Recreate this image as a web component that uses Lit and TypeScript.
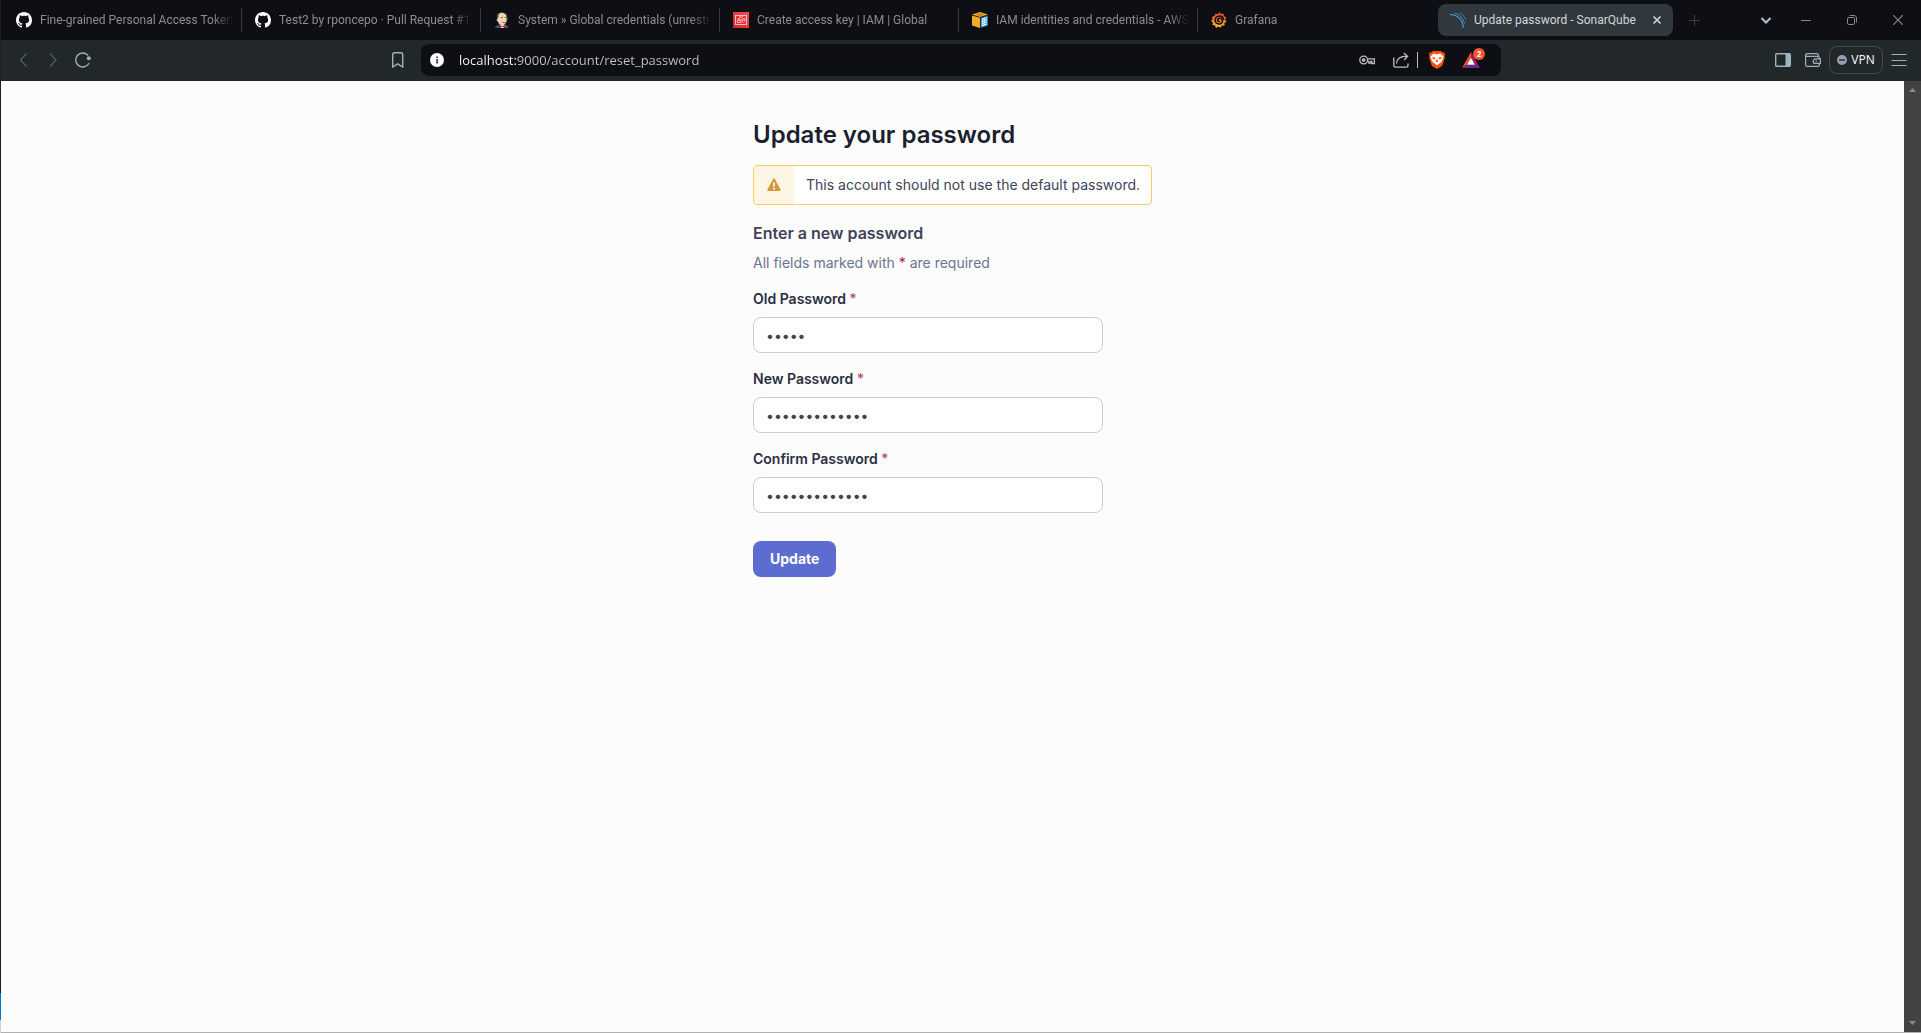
import { LitElement, html, svg, css, nothing } from "lit";
import { customElement, property } from "lit/decorators.js";
import { classMap } from "lit/directives/class-map.js";

const githubIcon = html`<svg width="16" height="16" viewBox="0 0 16 16" aria-hidden="true">
  <path fill="#fff" d="M8 0C3.58 0 0 3.58 0 8c0 3.54 2.29 6.53 5.47 7.59.4.07.55-.17.55-.38 0-.19-.01-.82-.01-1.49-2.01.37-2.53-.49-2.69-.94-.09-.23-.48-.94-.82-1.13-.28-.15-.68-.52-.01-.53.63-.01 1.08.58 1.23.82.72 1.21 1.87.87 2.33.66.07-.52.28-.87.51-1.07-1.78-.2-3.64-.89-3.64-3.95 0-.87.31-1.59.82-2.15-.08-.2-.36-1.02.08-2.12 0 0 .67-.21 2.2.82.64-.18 1.32-.27 2-.27s1.36.09 2 .27c1.53-1.04 2.2-.82 2.2-.82.44 1.1.16 1.92.08 2.12.51.56.82 1.27.82 2.15 0 3.07-1.87 3.75-3.65 3.95.29.25.54.73.54 1.48 0 1.07-.01 1.93-.01 2.2 0 .21.15.46.55.38A8.01 8.01 0 0 0 16 8c0-4.42-3.58-8-8-8z"/>
</svg>`;

const jenkinsIcon = html`<svg width="16" height="16" viewBox="0 0 16 16" aria-hidden="true">
  <path fill="#3a5366" d="M1 16c.2-1.7 1.6-2.700 3.600-3.200l6.400-.3c2 .4 3.400 1.500 3.500 3.500z"/>
  <path fill="#f0d6b7" stroke="#3b3028" stroke-width=".7" d="M3.300 3.200C4.500.8 7 .2 9.200.7c2.800.6 4.100 2.800 4 5.600 0 3-1.200 6-3.700 6.900C7 13.800 4.500 12.500 3.900 9.900 2.600 9.300 2.300 7.600 3.200 6.700z"/>
  <path fill="#6d5846" d="M3 3.400c.6-1.300 1.500-2 2.500-2.400C4.700 2.500 4.900 4.600 4.200 6L3.200 6.800zM11.800 2c1 .9 1.600 2.400 1.500 4.200l-.7.800z"/>
  <path fill="#42352b" d="M7 5h1.800v.8H7zM10.600 5h1.500v.8h-1.500zM8.300 9.700c1 .7 2 .7 3 .1v.7c-1 .5-2 .5-3 0z"/>
  <path fill="#fff" d="M6 12.800l2.500-.3 2.400.3-1.400 3.200H7z"/>
  <path fill="#d3252b" d="M5.700 13l2.700 1 2.800-1.200.2 3-3-1-2.500 1z"/>
</svg>`;

const iamIcon = html`<svg width="16" height="16" viewBox="0 0 16 16" aria-hidden="true">
  <defs><linearGradient id="iam" x1="0" y1="1" x2="1" y2="0"><stop offset="0" stop-color="#d0232c"/><stop offset="1" stop-color="#f74b50"/></linearGradient></defs>
  <path fill="url(#iam)" d="M0 0h16v16H0z"/>
  <g fill="none" stroke="#ffc9ca" stroke-width=".9">
    <rect x="2.500" y="3.500" width="11" height="9"/>
    <path d="M6 4.900h4M4.400 10.500V8.300h3.200v2.200zM5 8.200V7.100c0-1 2-1 2 0v1.100M9.200 7h2.900M9.200 7v3.600M11.700 7v1.800h-1"/>
  </g>
</svg>`;

const awsIcon = html`<svg width="16" height="16" viewBox="0 0 16 16" aria-hidden="true">
  <path fill="#f5b335" d="M0 2.600L8 0l8 2.600L8 5z"/>
  <path fill="#8b5b12" d="M2.700 2.600L8 1l5.300 1.600L8 4.200z" opacity=".45"/>
  <path fill="#f3ab24" d="M0 3.400l8 2.300V16l-8-2.600z"/>
  <path fill="#1f7fb5" d="M8.700 5.700L16 3.400v10.200L8.700 16z"/>
  <path fill="#e9f6fd" d="M9.800 6.600l4.800-1.500v7.800l-4.800 1.500z"/>
  <path stroke="#1f7fb5" stroke-width=".9" d="M10.600 8.100l1.300-.4M12.600 7.500l1.300-.4M10.600 10.300l1.300-.4M12.600 9.700l1.300-.4M10.600 12.400l1.300-.4M12.600 11.800l1.300-.4"/>
</svg>`;

const grafanaIcon = html`<svg width="16" height="16" viewBox="0 0 16 16" aria-hidden="true">
  <defs><linearGradient id="gf" x1="0" y1="0" x2="0" y2="1"><stop offset="0" stop-color="#f0472a"/><stop offset=".55" stop-color="#f58024"/><stop offset="1" stop-color="#fcc21b"/></linearGradient></defs>
  <path fill="url(#gf)" d="M8.300 0l1.500 1.900 2.700-.4.300 2.600 2.400 1.300-1.100 2.100 1.400 2.300-2.100 1.300.1 2.600-2.700-.1-1.200 2.200-2.200-1.400-2.400 1.500-1-2.500-2.600-.3.500-2.400L0 8.900l1.600-1.700L1 4.700l2.500-.6L4.500 1.600l2.300.6z"/>
  <path fill="none" stroke="#0e0f14" stroke-width="1.500" stroke-linecap="round" d="M12.700 7.500C12.300 5.100 10.700 3.900 8.500 3.900 5.800 3.900 4.100 5.900 4.200 8.300c.2 2.200 1.900 3.800 4.100 3.700 2-.1 3.200-1.600 3.100-3.300-.1-1.600-1.300-2.600-2.700-2.500-1.300.1-2.100 1-2 2.100.1.900.8 1.400 1.600 1.300"/>
</svg>`;

const sonarIcon = html`<svg width="16" height="16" viewBox="0 0 16 16" aria-hidden="true">
  <g fill="none" stroke="#4695c8" stroke-linecap="round">
    <path stroke-width="1.200" d="M.5 2.600C7.500 2.600 13 8 13.200 15.400"/>
    <path stroke-width="1" d="M5.300 1.300c4.600 1.400 8 5 9.100 9.800"/>
    <path stroke-width=".8" d="M9.700.7c2.800 1.400 4.900 3.800 6 6.800"/>
  </g>
</svg>`;

const stroke = (size: number, d: string, width = 1) => html`<svg width=${size} height=${size} viewBox="0 0 ${size} ${size}" aria-hidden="true">
  ${svg`<path d=${d} fill="none" stroke="currentColor" stroke-width=${width}/>`}
</svg>`;

interface Tab {
  title: string;
  icon: unknown;
  active?: boolean;
}

const tabs: Tab[] = [
  { title: "Fine-grained Personal Access Tokens", icon: githubIcon },
  { title: "Test2 by rponcepo · Pull Request #18", icon: githubIcon },
  { title: "System » Global credentials (unrestri", icon: jenkinsIcon },
  { title: "Create access key | IAM | Global", icon: iamIcon },
  { title: "IAM identities and credentials - AWS", icon: awsIcon },
  { title: "Grafana", icon: grafanaIcon },
  { title: "Update password - SonarQube", icon: sonarIcon, active: true },
];

const resetButton = css`
  * { box-sizing: border-box; }
  button { border: 0; padding: 0; margin: 0; background: none; color: inherit; font: inherit; cursor: pointer; }
  svg { display: block; flex: none; }
`;

@customElement("tab-strip")
class TabStrip extends LitElement {
  static styles = [resetButton, css`
    :host {
      display: flex; align-items: center; height: 40px; padding-left: 2px;
      background: #0e0f14; color: #8c8d90;
      font: 12px/16px Roboto, "Open Sans", sans-serif;
    }
    .tabs { display: flex; align-items: center; min-width: 0; flex: 0 1 auto; }
    .tab {
      display: flex; align-items: center; flex: 0 1 239px; width: 239px; min-width: 0;
      height: 24px; padding: 0 8px 0 13px; border-right: 1px solid #3a3b3e;
    }
    .tab.last { border-right-color: transparent; }
    .tab.active {
      flex-basis: 235px; width: 235px; height: 32px; margin: 0 3px 0 1px; padding: 0 8px 0 12px;
      border: 0; border-radius: 8px; background: #30383d; color: #d3d6d8;
    }
    .main { display: flex; align-items: center; gap: 8px; min-width: 0; flex: 1; text-align: left; }
    .title {
      flex: 1; min-width: 0; overflow: hidden; white-space: nowrap;
      mask-image: linear-gradient(to right, #000 calc(100% - 20px), transparent);
    }
    .active .title { mask-image: none; }
    .icon-button { display: grid; place-items: center; flex: none; height: 32px; }
    .close { width: 16px; height: 16px; color: #d3d6d8; }
    .add { width: 32px; margin-left: 2px; color: #3c3e42; }
    .controls { display: flex; margin-left: auto; flex: none; }
    .search { width: 28px; margin-right: 3px; color: #b4c5cc; }
    .control { width: 46px; color: #85878a; }
  `];

  render() {
    return html`
      <div class="tabs">
        ${tabs.map((t, i) => html`
          <div class=${classMap({ tab: true, active: !!t.active, last: !!tabs[i + 1]?.active })}>
            <button class="main">${t.icon}<span class="title">${t.title}</span></button>
            ${t.active ? html`<button class="icon-button close" aria-label="Close tab">${stroke(10, "M1.500 1.500l7 7M8.500 1.500l-7 7", 1.6)}</button>` : nothing}
          </div>`)}
      </div>
      <button class="icon-button add" aria-label="New tab">${stroke(11, "M0 5.500h11M5.500 0v11", 1)}</button>
      <div class="controls">
        <button class="icon-button search" aria-label="Search tabs">${stroke(12, "M1.500 4L6 8.500 10.500 4", 2)}</button>
        <button class="icon-button control" aria-label="Minimize">${stroke(10, "M0 5.500h10")}</button>
        <button class="icon-button control" aria-label="Restore">${stroke(10, "M.5 4Q.5 2.500 2 2.500h4Q7.500 2.500 7.500 4v4Q7.500 9.500 6 9.500H2Q.5 9.500 .5 8zM2.500 .5H7Q9.500 .5 9.500 3v4.500")}</button>
        <button class="icon-button control" aria-label="Close window">${stroke(10, "M0 0l10 10M10 0L0 10", 1.2)}</button>
      </div>`;
  }
}

@customElement("nav-bar")
class NavBar extends LitElement {
  static styles = [resetButton, css`
    :host {
      display: grid; grid-template-columns: 1fr minmax(0, 1080px) 1fr; align-items: center;
      height: 41px; padding-bottom: 1px; background: #22272a; color: #9db2bc;
      font: 12px/20px "Open Sans", "Noto Sans", sans-serif;
    }
    .left, .right, .address, .actions { display: flex; align-items: center; }
    .left { padding: 0 14px; gap: 14px; }
    .left button { display: grid; place-items: center; width: 16px; height: 24px; }
    .left .dim { color: #555f64; }
    .left .bookmark { margin-left: auto; }
    .address { height: 32px; padding: 0 21px 0 9px; border-radius: 8px; background: #0e0f14; gap: 15px; }
    .url {
      flex: 1; min-width: 0; border: 0; padding: 0; outline: 0; font: 13px/20px "Open Sans", "Noto Sans", sans-serif;
      color: transparent; caret-color: #fff;
      background: linear-gradient(to right, #fff 58px, #c3c4c6 58px); background-clip: text; -webkit-background-clip: text;
    }
    .actions { gap: 10px; color: #b9bcbe; }
    .share { margin-left: 8px; }
    .divider { width: 1px; height: 16px; background: #b9bcbe; margin: 0 1px 0 -2px; }
    .rewards { position: relative; margin-left: 7px; }
    .badge {
      position: absolute; left: 11px; top: -4px; width: 12px; height: 12px; border-radius: 6px;
      background: #fb542b; color: #fff; font: 700 8px/12px "Open Sans", sans-serif; text-align: center;
    }
    .right { justify-content: flex-end; gap: 14px; padding-right: 14px; }
    .vpn {
      display: flex; align-items: center; justify-content: center; gap: 4px; width: 54px; height: 28px;
      border: 1px solid #3e4b50; border-radius: 8px; color: #fff; margin: 0 -6px;
    }
  `];

  render() {
    return html`
      <div class="left">
        <button class="dim" aria-label="Back">${stroke(16, "M11.500 1.500L5.500 8l6 6.500", 1.2)}</button>
        <button class="dim" aria-label="Forward">${stroke(16, "M5 1.500l6 6.500-6 6.500", 1.2)}</button>
        <button aria-label="Reload"><svg width="16" height="16" viewBox="0 0 16 16">
          <path fill="none" stroke="currentColor" stroke-width="1.400" stroke-linecap="round" d="M12.700 3A7 7 0 1 0 13.800 11.500"/>
          <circle cx="13.800" cy="6.300" r="2" fill="currentColor"/></svg></button>
        <button class="bookmark" aria-label="Bookmark">${stroke(16, "M1.700 2.500Q1.700 .7 3.500 .7h6.400Q11.700 .7 11.700 2.500v12.500L6.700 11.800l-5 3.200z", 1.4)}</button>
      </div>
      <div class="address">
        <button aria-label="Site information"><svg width="14" height="14" viewBox="0 0 14 14"><circle cx="7" cy="7" r="7" fill="#fff"/><path fill="#22272a" d="M6.300 3.500h1.500v1.500H6.300zM6.300 6h1.500v4.500H6.300z"/></svg></button>
        <input class="url" type="text" aria-label="Address" value="localhost:9000/account/reset_password" />
        <div class="actions">
          <button aria-label="Passwords"><svg width="16" height="16" viewBox="0 0 16 16" fill="none" stroke="currentColor" stroke-width="1.300">
            <circle cx="4.700" cy="8" r="3.900"/><circle cx="4.700" cy="8" r="1.200" fill="currentColor"/>
            <path d="M8.500 6.800h6.900v4.700h-2.600V9.300h-1v1.700H9.800V9.300H8.500"/></svg></button>
          <button class="share" aria-label="Share">${stroke(16, "M.8 5.500v8Q.8 15.200 2.500 15.200h10.800Q15 15.200 15 13.500V11.500M3.500 11.500C3.800 7 7 4.200 14 4.200M10.800 .9L14.500 4.200l-3.300 3.800", 1.3)}</button>
          <span class="divider"></span>
          <button aria-label="Shields"><svg width="16" height="18" viewBox="2 0 14 18" preserveAspectRatio="none">
            <path fill="#fb4f0b" d="M5.500 0h7l1.500 1.500 1.600-.1 .4 2.200-.3 1.500.2 1.600-2 7.100q-.4 1.300-1.500 2L9 18l-3.400-2.200q-1.100-.7-1.500-2l-2-7.100.2-1.600-.3-1.500 .4-2.200 1.600.1z"/>
            <path fill="#fff" d="M6 2.600l3 .7 3-.7 2.700 3-.7 2.600-1.300 3-1.800 1.300-1.900 2-1.900-2-1.800-1.300-1.300-3-.7-2.600z"/>
            <path fill="#fb4f0b" d="M4.800 5.900l3.100.8-.7 1.600-1.900-.6zM13.200 5.900l-3.100.8.7 1.600 1.900-.6zM8.600 8.500h.8l.7 2L9 11.300l-1.100-.8z"/></svg></button>
          <button class="rewards" aria-label="Rewards"><svg width="18" height="16" viewBox="0 0 18 16">
            <path fill="#ff4724" d="M9 0v6L4.800 12.800 0 16z"/>
            <path fill="#9e1f63" d="M9 0l9 16-4.800-3.200L9 6z"/>
            <path fill="#662d91" d="M0 16l4.800-3.300h8.400L18 16z"/>
            <path fill="#fff" d="M9 5.800l4 7H5z"/></svg><span class="badge">2</span></button>
        </div>
      </div>
      <div class="right">
        <button aria-label="Sidebar"><svg width="16" height="14" viewBox="0 0 16 14"><rect x=".7" y=".7" width="14.600" height="12.600" rx="1" fill="none" stroke="currentColor" stroke-width="1.400"/><path fill="currentColor" d="M10.500 1H15v12h-4.500z"/></svg></button>
        <button aria-label="Wallet"><svg width="16" height="14" viewBox="0 0 16 14" fill="none" stroke="currentColor" stroke-width="1.200">
          <path d="M.6 2.300V11.700Q.6 13.400 2.300 13.400h10.400q1.700 0 1.700-1.700V10.500M14.400 6V5Q14.400 3.400 12.700 3.400H2.300Q.6 3.400 .6 2Q.6 .6 2.300 .6h9.400q1.700 0 1.700 1.700v1"/>
          <path d="M15.400 5.900h-5a2.200 2.200 0 0 0 0 4.500h5zM10.500 8.200h1.400"/></svg></button>
        <button class="vpn"><svg width="10" height="10" viewBox="0 0 10 10"><circle cx="5" cy="5" r="5" fill="#9a9bb5"/><path fill="#22272a" d="M2 4.300h6v1.400H2z"/></svg>VPN</button>
        <button aria-label="Menu">${stroke(16, "M.5 2.500h15M.5 8.500h15M.5 13.500h15", 1.2)}</button>
      </div>`;
  }
}

@customElement("password-field")
class PasswordField extends LitElement {
  @property() label = "";
  @property() value = "";

  static styles = css`
    * { box-sizing: border-box; }
    :host { display: flex; flex-direction: column; gap: 8px; font: 14px/20px Inter, sans-serif; }
    label { color: #2a2f40; font-weight: 600; }
    .mark { color: #b23a56; font-weight: 400; }
    input {
      width: 100%; max-width: 350px; height: 36px; padding: 0 12px; border: 1px solid #c5cddf;
      border-radius: 8px; background: #fff; color: #3e4357; font: inherit; outline: 0;
    }
    input:focus { border-color: #5d6cd0; }
  `;

  render() {
    return html`
      <label for="field">${this.label} <span class="mark">*</span></label>
      <input id="field" type="password" required .value=${this.value} />`;
  }
}

@customElement("password-page")
class PasswordPage extends LitElement {
  static styles = css`
    * { box-sizing: border-box; }
    :host { display: block; padding: 36px 16px; background: #fcfcfd; font: 14px/20px Inter, sans-serif; color: #3e4357; }
    .column { width: 100%; max-width: 399px; margin: 0 auto; }
    h1 { margin: 0 0 12px; font-size: 24px; line-height: 36px; font-weight: 600; color: #1b1f30; }
    .alert { display: flex; height: 40px; margin-bottom: 16px; border: 1px solid #f8cd5c; border-radius: 4px; background: #fff; overflow: hidden; }
    .alert-icon { display: grid; place-items: center; width: 40px; flex: none; background: #fdf5e4; }
    .alert-text { margin: 0; padding: 9px 12px; white-space: nowrap; }
    h2 { margin: 0 0 8px; font-size: 16px; line-height: 24px; font-weight: 600; color: #3e4357; }
    .note { margin: 0 0 16px; color: #6a7590; }
    .mark { color: #a8293f; }
    form { display: flex; flex-direction: column; gap: 16px; }
    .submit {
      align-self: flex-start; height: 36px; margin-top: 12px; padding: 0 17px; border: 0; border-radius: 8px;
      background: #5d6cd0; color: #fff; font: 700 14px/20px Inter, sans-serif; cursor: pointer;
    }
  `;

  render() {
    return html`
      <main class="column">
        <h1>Update your password</h1>
        <div class="alert" role="alert">
          <span class="alert-icon"><svg width="14" height="14" viewBox="0 0 14 14" aria-hidden="true">
            <path fill="#d29a35" fill-rule="evenodd" d="M6.100 1q.9-1.300 1.800 0l5.600 10.500q.5 1.500-.9 1.500H1.400q-1.400 0-.9-1.500zM6 4.500v4h2v-4zM6 9.700v1.800h2V9.700z"/></svg></span>
          <p class="alert-text">This account should not use the default password.</p>
        </div>
        <h2>Enter a new password</h2>
        <p class="note">All fields marked with <span class="mark">*</span> are required</p>
        <form @submit=${(e: Event) => e.preventDefault()}>
          <password-field label="Old Password" value="admin"></password-field>
          <password-field label="New Password" value="correct-horse"></password-field>
          <password-field label="Confirm Password" value="correct-horse"></password-field>
          <button class="submit" type="submit">Update</button>
        </form>
      </main>`;
  }
}

@customElement("app-root")
class AppRoot extends LitElement {
  static styles = css`
    * { box-sizing: border-box; }
    :host { display: block; }
    .screen { display: flex; min-height: 100vh; }
    .edge { display: flex; flex-direction: column; width: 1px; flex: none; background: #1f1f1f; }
    .edge-blue { height: 27px; margin-top: auto; background: #0078d4; }
    .edge-grey { height: 13px; background: #d0d0d0; }
    .window { display: flex; flex-direction: column; flex: 1; min-width: 0; border-bottom: 1px solid #b0b0b0; }
    .body { display: flex; flex: 1; }
    .page { flex: 1; min-width: 0; }
    .scrollbar { display: flex; flex-direction: column; justify-content: space-between; align-items: center; width: 17px; padding: 7px 0; background: #424242; }
    .scrollbar svg { display: block; }
  `;

  render() {
    return html`
      <div class="screen">
        <div class="edge"><span class="edge-blue"></span><span class="edge-grey"></span></div>
        <div class="window">
          <tab-strip></tab-strip>
          <nav-bar></nav-bar>
          <div class="body">
            <password-page class="page"></password-page>
            <div class="scrollbar" aria-hidden="true">
              <svg width="7" height="4" viewBox="0 0 7 4"><path fill="#8a8a8a" d="M0 4l3.500-4L7 4z"/></svg>
              <svg width="7" height="4" viewBox="0 0 7 4"><path fill="#8a8a8a" d="M0 0l3.500 4L7 0z"/></svg>
            </div>
          </div>
        </div>
      </div>`;
  }
}
